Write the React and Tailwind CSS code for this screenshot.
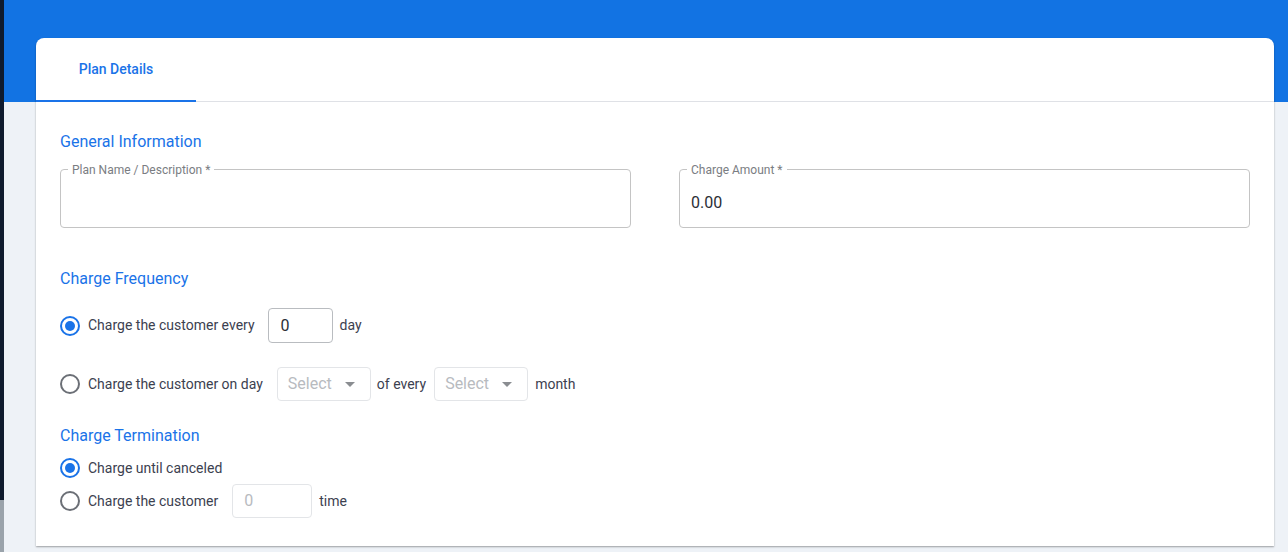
import React from "react";

function Radio({ checked }) {
  return (
    <span
      className={
        "flex h-5 w-5 shrink-0 items-center justify-center rounded-full border-2 " +
        (checked ? "border-[#1a73e8]" : "border-[#6b6f76]")
      }
    >
      {checked && <span className="h-[10px] w-[10px] rounded-full bg-[#1a73e8]" />}
    </span>
  );
}

function SelectBox() {
  return (
    <div className="flex h-[34px] w-[94px] items-center justify-between rounded border border-[#e3e5e8] pl-[10px] pr-[15px]">
      <span className="text-[16px] text-[#b8bbbf]">Select</span>
      <svg width="10" height="5" viewBox="0 0 10 5">
        <path d="M0 0h10L5 5z" fill="#8a8d91" />
      </svg>
    </div>
  );
}

function OutlinedField({ label, value }) {
  return (
    <div className="relative h-[59px] flex-1 rounded border border-[#c4c4c4]">
      <span className="absolute left-[7px] top-[-7px] bg-white px-[4px] text-[12px] leading-[14px] text-[#7a7d82]">
        {label}
      </span>
      <div className="pl-[11px] pt-[23px] text-[16px] leading-[20px] text-[#2b2f36]">{value}</div>
    </div>
  );
}

export default function App() {
  return (
    <div
      className="relative flex h-[552px] w-[1288px] overflow-hidden bg-[#eef2f7]"
      style={{ fontFamily: "Roboto, 'Noto Sans', Arial, sans-serif" }}
    >
      <div className="flex w-[4px] shrink-0 flex-col bg-[#0f1b2e]">
        <div className="h-[500px]" />
        <div className="flex-1 bg-[#9aa3ab]" />
      </div>
      <div className="relative flex-1">
        <div className="h-[102px] bg-[#1273e3]" />
        <div className="absolute left-[32px] top-[38px] h-[508px] w-[1238px] rounded-t-lg bg-white shadow-[0_1px_2px_rgba(0,0,0,0.35)]">
          <div className="flex h-[64px] border-b border-[#dfe1e6]">
            <div className="flex w-[160px] flex-col">
              <div className="flex flex-1 items-center justify-center text-[14px] font-medium text-[#1a73e8]">
                Plan Details
              </div>
              <div className="-mb-px h-[2px] bg-[#1a73e8]" />
            </div>
          </div>
          <div className="px-[24px] pt-[30px]">
            <div className="text-[16px] leading-[20px] text-[#1a73e8]">General Information</div>
            <div className="mt-[17px] flex gap-[48px]">
              <OutlinedField label="Plan Name / Description *" value="" />
              <OutlinedField label="Charge Amount *" value="0.00" />
            </div>
            <div className="mt-[41px] text-[16px] leading-[20px] text-[#1a73e8]">Charge Frequency</div>
            <div className="mt-[19px] flex h-[35px] items-center text-[14px] text-[#3c4150]">
              <Radio checked />
              <span className="ml-[8px]">Charge the customer every</span>
              <div className="ml-[13px] flex h-[35px] w-[65px] items-center rounded border border-[#b9bcc0] pl-[12px] text-[16px] text-[#2b2f36]">
                0
              </div>
              <span className="ml-[7px]">day</span>
            </div>
            <div className="mt-[24px] flex h-[34px] items-center text-[14px] text-[#3c4150]">
              <Radio />
              <span className="ml-[8px]">Charge the customer on day</span>
              <div className="ml-[14px]">
                <SelectBox />
              </div>
              <span className="ml-[6px]">of every</span>
              <div className="ml-[8px]">
                <SelectBox />
              </div>
              <span className="ml-[7px]">month</span>
            </div>
            <div className="mt-[25px] text-[16px] leading-[20px] text-[#1a73e8]">Charge Termination</div>
            <div className="mt-[11px] flex h-[22px] items-center text-[14px] text-[#3c4150]">
              <Radio checked />
              <span className="ml-[8px]">Charge until canceled</span>
            </div>
            <div className="mt-[5px] flex h-[34px] items-center text-[14px] text-[#3c4150]">
              <Radio />
              <span className="ml-[8px]">Charge the customer</span>
              <div className="ml-[14px] flex h-[34px] w-[80px] items-center rounded border border-[#e3e5e8] pl-[11px] text-[16px] text-[#b8bbbf]">
                0
              </div>
              <span className="ml-[7px]">time</span>
            </div>
          </div>
        </div>
      </div>
    </div>
  );
}
